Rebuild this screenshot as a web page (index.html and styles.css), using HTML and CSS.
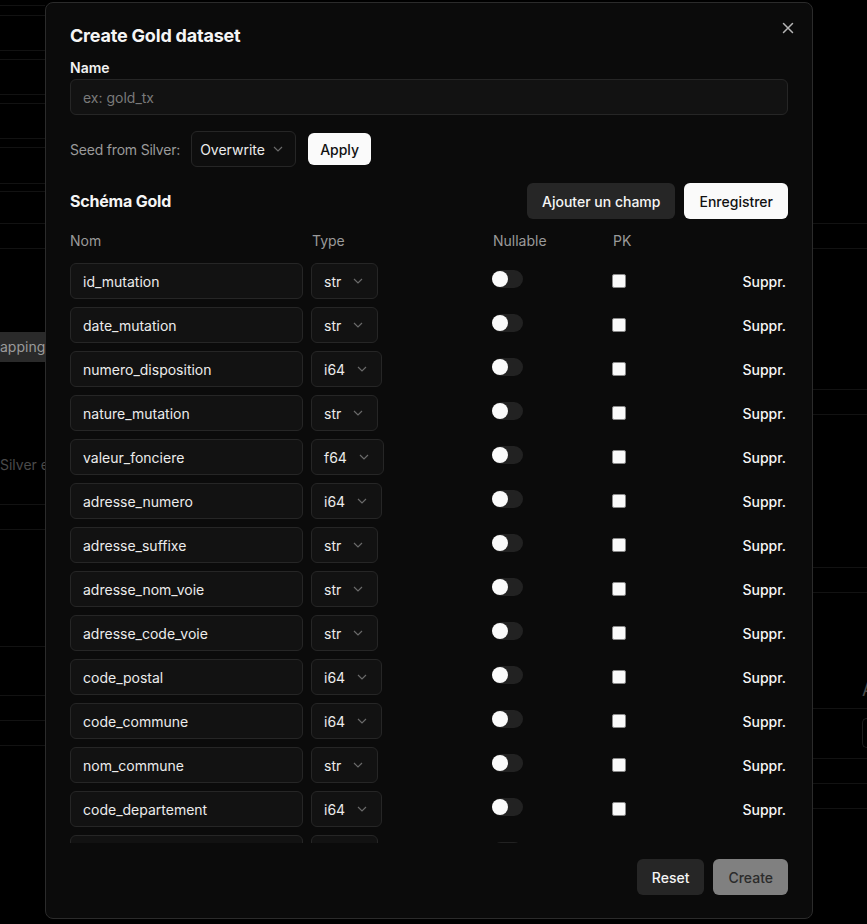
FILE: index.html
```html
<!DOCTYPE html>
<html lang="fr">
<head>
<meta charset="utf-8">
<title>Create Gold dataset</title>
<link rel="stylesheet" href="styles.css">
</head>
<body>
<div class="backdrop">
  <div class="bg-left">
    <div class="ln h5"></div><div class="ln h10"></div><div class="ln h35"></div><div class="ln h9"></div>
    <div class="ln h35"></div><div class="ln h9"></div><div class="ln h35"></div><div class="ln h9"></div>
    <div class="ln h36"></div><div class="ln h8"></div><div class="ln h32"></div><div class="ln h25"></div>
    <div class="badge">apping</div>
    <div class="dim-text">Silver et</div>
    <div class="ln h80"></div><div class="ln h25"></div><div class="ln h117"></div><div class="ln h49"></div>
    <div class="ln h25"></div><div class="ln h25"></div>
  </div>
  <div class="bg-right">
    <div class="ln h223"></div><div class="ln h25"></div><div class="ln h141"></div><div class="ln h25"></div>
    <div class="ln h153"></div><div class="ln h25"></div>
    <div class="ln h116 rtext"><span class="dim-a">A</span></div>
    <div class="rbox"></div>
    <div class="ln h10b"></div><div class="ln h25"></div><div class="ln h25"></div>
  </div>
</div>

<div class="modal">
  <button class="close" aria-label="Close">
    <svg width="12" height="12" viewBox="0 0 12 12"><path d="M1.5 1.5 L10.5 10.5 M10.5 1.5 L1.5 10.5" stroke="#b5b5b5" stroke-width="1.5" stroke-linecap="round"/></svg>
  </button>
  <h1 class="title">Create Gold dataset</h1>
  <label class="label">Name</label>
  <div class="input placeholder">ex: gold_tx</div>

  <div class="seed-row">
    <span class="muted">Seed from Silver:</span>
    <div class="select seed-select"><span>Overwrite</span><svg class="chev" width="10" height="6" viewBox="0 0 10 6"><path d="M1 1 L5 5 L9 1" fill="none" stroke="#6a6a6a" stroke-width="1.2"/></svg></div>
    <button class="btn btn-light btn-sm">Apply</button>
  </div>

  <div class="schema-head">
    <h2 class="subtitle">Schéma Gold</h2>
    <div class="actions">
      <button class="btn btn-dark">Ajouter un champ</button>
      <button class="btn btn-light">Enregistrer</button>
    </div>
  </div>

  <div class="grid col-head">
    <span>Nom</span><span>Type</span><span>Nullable</span><span>PK</span><span></span>
  </div>

  <div class="rows" id="rows"></div>

  <div class="footer">
    <button class="btn btn-dark">Reset</button>
    <button class="btn btn-disabled">Create</button>
  </div>
</div>

<template id="row-tpl">
  <div class="grid row">
    <div class="input name"></div>
    <div class="type-cell"><div class="select type"><span class="tval"></span><svg class="chev" width="10" height="6" viewBox="0 0 10 6"><path d="M1 1 L5 5 L9 1" fill="none" stroke="#6a6a6a" stroke-width="1.2"/></svg></div></div>
    <div class="toggle-cell"><div class="toggle"><div class="knob"></div></div></div>
    <div class="pk-cell"><div class="check"></div></div>
    <div class="del">Suppr.</div>
  </div>
</template>
<script src="app.js"></script>
</body>
</html>
```

FILE: app.js
```js
const fields = [
  ["id_mutation","str"],["date_mutation","str"],["numero_disposition","i64"],["nature_mutation","str"],
  ["valeur_fonciere","f64"],["adresse_numero","i64"],["adresse_suffixe","str"],["adresse_nom_voie","str"],
  ["adresse_code_voie","str"],["code_postal","i64"],["code_commune","i64"],["nom_commune","str"],
  ["code_departement","i64"],["ancien_code_commune","str"],["id_parcelle","str"]
];
const rows = document.getElementById("rows");
const tpl = document.getElementById("row-tpl");
fields.forEach(([n,t]) => {
  const el = tpl.content.cloneNode(true);
  el.querySelector(".name").textContent = n;
  el.querySelector(".tval").textContent = t;
  rows.appendChild(el);
});
```

FILE: styles.css
```css
* { box-sizing: border-box; }
html, body { margin: 0; padding: 0; }
body {
  background: #000;
  font-family: Inter, "Liberation Sans", sans-serif;
  color: #f2f2f2;
  width: 867px;
  height: 924px;
  overflow: hidden;
}
.backdrop {
  display: flex;
  justify-content: space-between;
  height: 924px;
}
.bg-left { width: 45px; display: flex; flex-direction: column; }
.bg-right { width: 55px; display: flex; flex-direction: column; }
.ln { border-bottom: 1px solid #121212; flex: none; }
.h5 { height: 6px; } .h10 { height: 10px; } .h35 { height: 35px; } .h9 { height: 9px; }
.h36 { height: 36px; } .h8 { height: 8px; } .h32 { height: 32px; } .h25 { height: 25px; }
.h80 { height: 30px; } .h117 { height: 117px; } .h49 { height: 49px; }
.h223 { height: 224px; } .h141 { height: 141px; } .h153 { height: 153px; } .h116 { height: 116px; }
.h10b { height: 11px; }
.badge {
  margin-top: 83px;
  height: 30px;
  background: #2a2a2a;
  color: #9a9a9a;
  font-size: 14px;
  line-height: 30px;
  white-space: nowrap;
  overflow: hidden;
}
.dim-text {
  margin-top: 93px;
  color: #4a4a4a;
  font-size: 14px;
  line-height: 20px;
  white-space: nowrap;
  overflow: hidden;
  height: 20px;
}
.rtext { display: flex; align-items: flex-end; padding-bottom: 8px; }
.dim-a { color: #4a4a4a; font-size: 18px; margin-left: 50px; }
.rbox {
  margin-top: 9px;
  margin-left: 50px;
  height: 30px;
  border: 1px solid #1d1d1d;
  border-right: none;
  border-radius: 5px 0 0 5px;
}

.modal {
  position: fixed;
  left: 45px;
  top: 2px;
  width: 768px;
  height: 917px;
  background: #0b0b0b;
  border: 1px solid #2b2b2b;
  border-radius: 8px;
  padding: 20px 24px 22px;
  display: flex;
  flex-direction: column;
}
.close {
  position: absolute;
  right: 17px;
  top: 18px;
  width: 14px;
  height: 14px;
  padding: 0;
  border: none;
  background: none;
  display: flex;
  align-items: center;
  justify-content: center;
}
.title {
  margin: 0;
  font-size: 18px;
  line-height: 26px;
  font-weight: 700;
  letter-spacing: -0.2px;
  color: #f5f5f5;
}
.label {
  margin-top: 9px;
  font-size: 14px;
  line-height: 20px;
  font-weight: 600;
  color: #f2f2f2;
}
.input {
  margin-top: 1px;
  height: 36px;
  background: #121212;
  border: 1px solid #262626;
  border-radius: 6px;
  padding: 0 12px;
  display: flex;
  align-items: center;
  font-size: 14px;
  color: #ececec;
}
.placeholder { color: #7a7a7a; }
.seed-row {
  margin-top: 16px;
  display: flex;
  align-items: center;
  height: 36px;
}
.muted { color: #9a9a9a; font-size: 14px; letter-spacing: -0.2px; }
.select {
  height: 36px;
  background: #0e0e0e;
  border: 1px solid #262626;
  border-radius: 6px;
  display: flex;
  align-items: center;
  font-size: 14px;
  color: #ececec;
}
.seed-select { margin-left: 11px; width: 105px; padding: 0 12px 0 8px; justify-content: space-between; }
.chev { flex: none; }
.btn {
  height: 36px;
  border: none;
  border-radius: 6px;
  font-family: inherit;
  font-size: 14px;
  font-weight: 500;
  padding: 0 15px;
  cursor: pointer;
}
.btn-sm { height: 32px; padding: 0 12px; margin-left: 12px; }
.btn-light { background: #fafafa; color: #111; }
.btn-dark { background: #262626; color: #f5f5f5; }
.btn-disabled { background: #808080; color: #2b2b2b; }
.schema-head {
  margin-top: 16px;
  display: flex;
  justify-content: space-between;
  align-items: center;
}
.subtitle {
  margin: 0;
  font-size: 16px;
  font-weight: 700;
  letter-spacing: -0.2px;
  color: #f5f5f5;
}
.actions { display: flex; gap: 9px; }
.grid {
  display: grid;
  grid-template-columns: 233px 173px 112px 1fr auto;
  column-gap: 8px;
  align-items: center;
}
.col-head {
  margin-top: 12px;
  font-size: 14px;
  line-height: 20px;
  color: #9a9a9a;
}
.col-head span:nth-child(2) { padding-left: 1px; }
.col-head span:nth-child(3), .col-head span:nth-child(4) { padding-left: 1px; }
.rows {
  margin-top: 12px;
  height: 580px;
  overflow: hidden;
  display: flex;
  flex-direction: column;
  gap: 8px;
  flex: none;
}
.row { flex: none; height: 36px; }
.row .input { margin-top: 0; }
.type-cell { display: flex; }
.select.type { background: #121212; padding: 0 14px 0 12px; gap: 12px; }
.toggle-cell { display: flex; align-items: flex-start; height: 36px; padding-top: 7px; }
.toggle {
  width: 31px;
  height: 18px;
  border-radius: 9px;
  background: #222;
  position: relative;
}
.knob {
  position: absolute;
  left: 0;
  top: 1px;
  width: 16px;
  height: 16px;
  border-radius: 50%;
  background: #fafafa;
}
.pk-cell { display: flex; }
.check {
  width: 14px;
  height: 14px;
  background: #fafafa;
  border: 1px solid #8a8a8a;
  border-radius: 2px;
}
.del {
  font-size: 14px;
  font-weight: 500;
  color: #f5f5f5;
  padding-right: 2px;
}
.footer {
  margin-top: 16px;
  display: flex;
  justify-content: flex-end;
  gap: 9px;
}
```
